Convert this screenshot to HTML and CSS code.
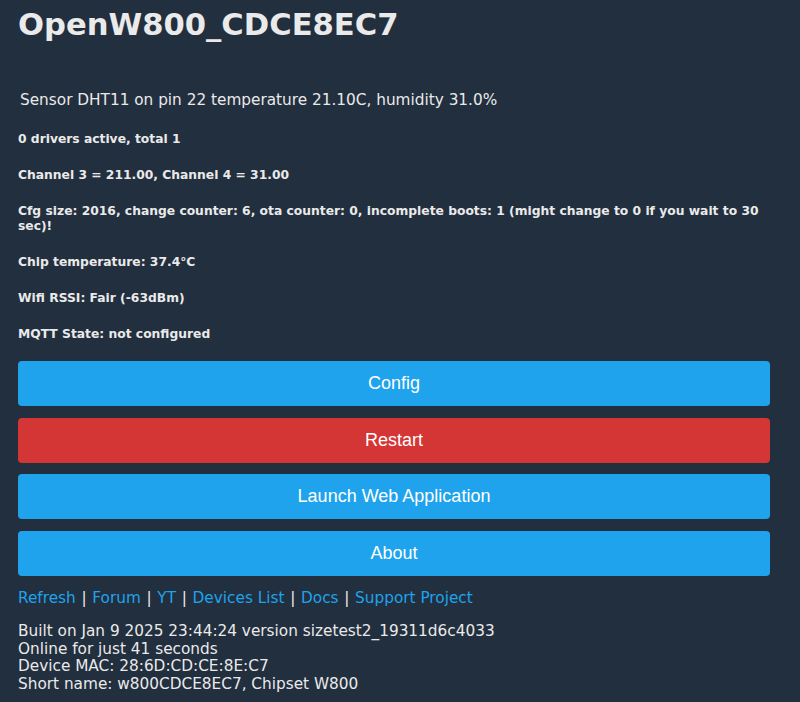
FILE: index.html
```html
<!DOCTYPE html>
<html lang="en">
<head>
<meta charset="UTF-8" />
<title>OpenW800_CDCE8EC7</title>
<link rel="stylesheet" href="styles.css">
</head>
<body>

<h1>OpenW800_CDCE8EC7</h1>

<div class="sensor">Sensor DHT11 on pin 22 temperature 21.10C, humidity 31.0%</div>

<h5 class="stat">0 drivers active, total 1</h5>
<h5 class="stat">Channel 3 = 211.00, Channel 4 = 31.00</h5>
<h5 class="stat">Cfg size: 2016, change counter: 6, ota counter: 0, incomplete boots: 1 (might change to 0 if you wait to 30 sec)!</h5>
<h5 class="stat">Chip temperature: 37.4°C</h5>
<h5 class="stat">Wifi RSSI: Fair (-63dBm)</h5>
<h5 class="stat">MQTT State: not configured</h5>

<div class="buttons">
    <button class="btn">Config</button>
    <button class="btn bred">Restart</button>
    <button class="btn">Launch Web Application</button>
    <button class="btn">About</button>
</div>

<div class="links">
    <a href="#">Refresh</a><span class="sep">|</span><a href="#">Forum</a><span class="sep">|</span><a href="#">YT</a><span class="sep">|</span><a href="#">Devices List</a><span class="sep">|</span><a href="#">Docs</a><span class="sep">|</span><a href="#">Support Project</a>
</div>

<div class="info">
    Built on Jan 9 2025 23:44:24 version sizetest2_19311d6c4033<br>
    Online for just 41 seconds<br>
    Device MAC: 28:6D:CD:CE:8E:C7<br>
    Short name: w800CDCE8EC7, Chipset W800
</div>

</body>
</html>
```

FILE: styles.css
```css
body {
    margin: 0;
    padding: 0 30px 0 18px;
    background: #222f3e;
    color: #eaeaea;
    font-family: "DejaVu Sans", Verdana, sans-serif;
}
h1 {
    font-size: 30.6px;
    line-height: 40px;
    margin: 5px 0 0;
}
.sensor {
    font-size: 15.3px;
    line-height: 20px;
    margin-top: 45px;
    padding: 0 2px;
}
.stat {
    font-size: 12.3px;
    line-height: 15px;
    margin: 21px 0 0;
}
.stat:first-of-type {
    margin-top: 22px;
}
.buttons {
    display: flex;
    flex-direction: column;
    gap: 11.7px;
    margin-top: 19px;
}
.btn {
    border: 0;
    border-radius: 4px;
    background: #1fa3ec;
    color: #fff;
    height: 45px;
    font-family: "Liberation Sans", Arial, sans-serif;
    font-size: 18px;
    width: 100%;
    cursor: pointer;
}
.bred {
    background: #d43535;
}
.links {
    font-size: 15.3px;
    line-height: 20px;
    margin-top: 12px;
}
.links a {
    color: #1fa3ec;
    text-decoration: none;
}
.sep {
    margin: 0 5.7px;
}
.info {
    font-size: 15.3px;
    line-height: 17.6px;
    margin-top: 15px;
}
```
